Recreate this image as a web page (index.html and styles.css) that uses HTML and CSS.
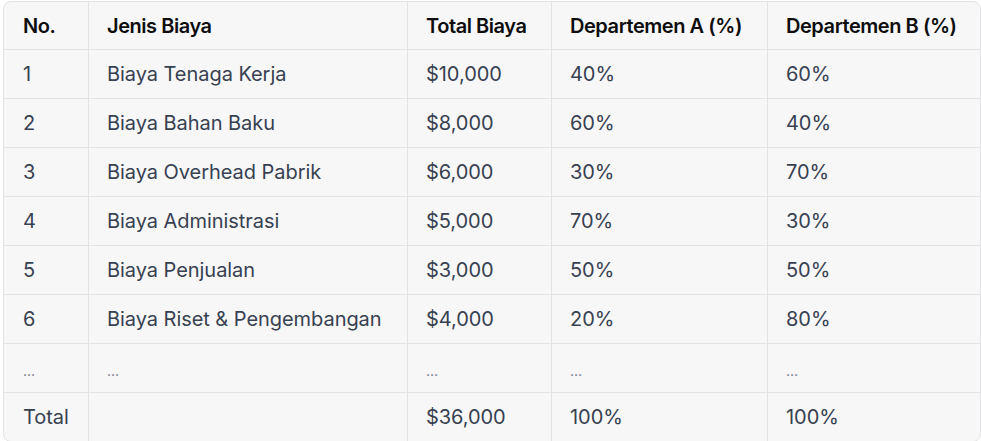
FILE: index.html
```html
<!DOCTYPE html>
<html>
<head>
<meta charset="utf-8">
<link rel="stylesheet" href="styles.css">
</head>
<body>
<div class="wrap">
<table class="cost">
  <colgroup>
    <col class="c1"><col class="c2"><col class="c3"><col class="c4"><col class="c5">
  </colgroup>
  <thead>
    <tr><th>No.</th><th>Jenis Biaya</th><th>Total Biaya</th><th>Departemen A (%)</th><th>Departemen B (%)</th></tr>
  </thead>
  <tbody>
    <tr><td>1</td><td>Biaya Tenaga Kerja</td><td>$10,000</td><td>40%</td><td>60%</td></tr>
    <tr><td>2</td><td>Biaya Bahan Baku</td><td>$8,000</td><td>60%</td><td>40%</td></tr>
    <tr><td>3</td><td>Biaya Overhead Pabrik</td><td>$6,000</td><td>30%</td><td>70%</td></tr>
    <tr><td>4</td><td>Biaya Administrasi</td><td>$5,000</td><td>70%</td><td>30%</td></tr>
    <tr><td>5</td><td>Biaya Penjualan</td><td>$3,000</td><td>50%</td><td>50%</td></tr>
    <tr><td>6</td><td>Biaya Riset &amp; Pengembangan</td><td>$4,000</td><td>20%</td><td>80%</td></tr>
    <tr class="dots"><td>...</td><td>...</td><td>...</td><td>...</td><td>...</td></tr>
    <tr class="total"><td>Total</td><td></td><td>$36,000</td><td>100%</td><td>100%</td></tr>
  </tbody>
</table>
</div>
</body>
</html>
```

FILE: styles.css
```css
html, body {
  margin: 0;
  padding: 0;
  background: #ffffff;
}
.wrap {
  padding: 1px 0 0 3px;
}
.cost {
  width: 978px;
  table-layout: fixed;
  border-collapse: separate;
  border-spacing: 0;
  background: #f7f7f8;
  border: 1px solid #e3e3e6;
  border-radius: 8px;
  font-family: Inter, "Noto Sans", sans-serif;
  font-size: 20px;
  letter-spacing: -0.05px;
  color: #374151;
}
.c1 { width: 84px; }
.c2 { width: 319px; }
.c3 { width: 144px; }
.c4 { width: 216px; }
.c5 { width: auto; }
.cost th, .cost td {
  height: 49px;
  padding: 0 0 0 18px;
  text-align: left;
  vertical-align: middle;
  border-bottom: 1px solid #e3e3e6;
  border-left: 1px solid #e3e3e6;
  box-sizing: border-box;
  white-space: nowrap;
}
.cost th:first-child, .cost td:first-child {
  border-left: none;
  padding-left: 19px;
}
.cost .total td {
  border-bottom: none;
  height: 48px;
}
.cost th {
  font-weight: 600;
  color: #0d0d0d;
  height: 48px;
  letter-spacing: -0.45px;
}
.cost .dots td {
  font-size: 14px;
  padding-top: 5px;
  color: #6b7280;
}
```
